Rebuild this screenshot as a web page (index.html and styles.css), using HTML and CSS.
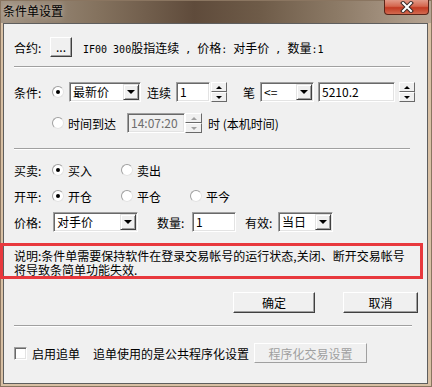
FILE: index.html
```
<!DOCTYPE html>
<html lang="zh-CN">
<head>
    <meta charset="UTF-8">
    <title>条件单设置</title>
    <link rel="stylesheet" href="styles.css">
</head>
<body>
    <div class="window">
        <div class="titlebar">
            <span class="title">条件单设置</span>
            <div class="close">
                <svg width="20" height="12" viewBox="0 0 20 12">
                    <path d="M6 2 L14 10 M14 2 L6 10" stroke="#3a2a28" stroke-width="4" stroke-linecap="square"/>
                    <path d="M6 2 L14 10 M14 2 L6 10" stroke="#fff" stroke-width="2" stroke-linecap="square"/>
                </svg>
            </div>
        </div>

        <div class="client">
            <div class="row contract">
                <span class="label w36">合约:</span>
                <div class="btn dots">...</div>
                <span class="summary"><span class="mono">IF00 300</span>股指连续<span class="mono"> , </span>价格<span class="mono">: </span>对手价<span class="mono"> , </span>数量<span class="mono">:1</span></span>
            </div>

            <div class="sep sep-top"></div>

            <div class="row cond1">
                <span class="label w38">条件:</span>
                <span class="radio checked"></span>
                <div class="combo w72 ml5"><span class="value">最新价</span><span class="arrow"></span></div>
                <span class="ml6">连续</span>
                <div class="edit w34 ml5">1</div>
                <div class="spin ml1"><span class="up"></span><span class="down"></span></div>
                <span class="ml16">笔</span>
                <div class="combo w54 ml5"><span class="value">&lt;=</span><span class="arrow"></span></div>
                <div class="edit w77 ml4">5210.2</div>
                <div class="spin ml4"><span class="up"></span><span class="down"></span></div>
            </div>

            <div class="row cond2">
                <span class="label w38"></span>
                <span class="radio"></span>
                <span class="ml4">时间到达</span>
                <div class="edit disabled w58 ml11">14:07:20</div>
                <div class="spin disabled"><span class="up"></span><span class="down"></span></div>
                <span class="ml6">时 (本机时间)</span>
            </div>

            <div class="sep sep-mid"></div>

            <div class="row side">
                <span class="label w38">买卖:</span>
                <span class="opt"><span class="radio checked"></span>买入</span>
                <span class="opt"><span class="radio"></span>卖出</span>
            </div>

            <div class="row offset">
                <span class="label w38">开平:</span>
                <span class="opt"><span class="radio checked"></span>开仓</span>
                <span class="opt"><span class="radio"></span>平仓</span>
                <span class="opt"><span class="radio"></span>平今</span>
            </div>

            <div class="row price">
                <span class="label w39">价格:</span>
                <div class="combo w85"><span class="value">对手价</span><span class="arrow"></span></div>
                <span class="label w35 ml19">数量:</span>
                <div class="edit w44">1</div>
                <span class="label w33 ml9">有效:</span>
                <div class="combo w55"><span class="value">当日</span><span class="arrow"></span></div>
            </div>

            <div class="note">说明:条件单需要保持软件在登录交易帐号的运行状态,关闭、断开交易帐号<br>将导致条简单功能失效.</div>

            <div class="actions">
                <div class="btn ok">确定</div>
                <div class="btn cancel">取消</div>
            </div>

            <div class="sep sep-bottom"></div>

            <div class="row follow">
                <span class="checkbox"></span>
                <span class="ml5">启用追单</span>
                <span class="ml13">追单使用的是公共程序化设置</span>
                <div class="btn prog disabled">程序化交易设置</div>
            </div>
        </div>
    </div>
</body>
</html>
```

FILE: styles.css
```
body {
    margin: 0;
    font-family: "Noto Sans CJK SC", "Liberation Sans", sans-serif;
    font-size: 12px;
    color: #000;
}

.window {
    width: 432px;
    height: 387px;
    box-sizing: border-box;
    padding: 0 4px 3px 3px;
    background:
        linear-gradient(180deg, rgba(0, 0, 0, 0) 0, rgba(0, 0, 0, 0) 23px, #d8c0a4 23px),
        linear-gradient(90deg, #a39585 0%, #85735f 22%, #5f4b3b 45%, #6e5b48 60%, #8c7a66 78%, #b6a493 100%);
    box-shadow: inset 0 0 0 1px #8a7560;
}

.titlebar {
    height: 23px;
    display: flex;
    align-items: flex-start;
    justify-content: space-between;
}

.title {
    line-height: 22px;
    color: #000;
    text-shadow: 0 0 6px rgba(255, 255, 255, 0.6);
}

.close {
    width: 45px;
    height: 15px;
    margin-right: -1px;
    box-sizing: border-box;
    border: 1px solid #5a2418;
    border-top: none;
    border-radius: 0 0 4px 4px;
    background: linear-gradient(180deg, #e29a88 0%, #d4664e 45%, #c23a22 55%, #d26a50 100%);
    display: flex;
    justify-content: center;
    align-items: center;
}

.client {
    height: 361px;
    box-sizing: border-box;
    border: 1px solid #5e5e5e;
    background: #f0f0f0;
    padding: 0 0 0 10px;
}

.row {
    display: flex;
    align-items: center;
    height: 20px;
    white-space: nowrap;
}

.contract { margin-top: 13px; }
.cond1 { margin-top: 14px; }
.cond2 { margin-top: 11px; }
.side { margin-top: 10px; }
.offset { margin-top: 6px; }
.price { margin-top: 6px; }
.follow { margin-top: 16px; }

.label { flex: none; }
.w33 { width: 33px; }
.w35 { width: 35px; }
.w36 { width: 36px; }
.w38 { width: 38px; }
.w39 { width: 39px; }

.ml1 { margin-left: 1px; }
.ml4 { margin-left: 4px; }
.ml5 { margin-left: 5px; }
.ml6 { margin-left: 6px; }
.ml9 { margin-left: 9px; }
.ml11 { margin-left: 11px; }
.ml13 { margin-left: 13px; }
.ml16 { margin-left: 16px; }
.ml19 { margin-left: 19px; }

.summary {
    margin-left: 11px;
    white-space: pre;
}

.mono {
    font-family: "DejaVu Sans Mono", monospace;
    font-size: 10px;
}

.sep {
    width: 396px;
    height: 0;
    border-top: 1px solid #a0a0a0;
    border-bottom: 1px solid #fff;
}

.sep-top { margin-top: 9px; }
.sep-mid { margin-top: 15px; width: 396px; }
.sep-bottom { margin-top: 12px; width: 398px; }

/* classic sunken fields */
.combo,
.edit {
    height: 20px;
    box-sizing: border-box;
    border: 1px solid;
    border-color: #a0a0a0 #fff #fff #a0a0a0;
    box-shadow: inset 1px 1px 0 #696969, inset -1px -1px 0 #e3e3e3;
    background: #fff;
    padding: 1px;
    display: flex;
    align-items: center;
}

.edit {
    padding-left: 3px;
    line-height: 16px;
}

.edit.disabled {
    background: #f0f0f0;
    color: #6d6d6d;
}

.w34 { width: 34px; }
.w44 { width: 44px; }
.w54 { width: 54px; }
.w55 { width: 55px; }
.w58 { width: 58px; }
.w72 { width: 72px; }
.w77 { width: 77px; }
.w85 { width: 85px; }

.combo .value {
    flex: 1;
    padding-left: 2px;
    line-height: 16px;
}

.combo .arrow {
    width: 16px;
    height: 16px;
    box-sizing: border-box;
    border: 1px solid;
    border-color: #e3e3e3 #404040 #404040 #e3e3e3;
    box-shadow: inset 1px 1px 0 #fff, inset -1px -1px 0 #a0a0a0;
    background: #f0f0f0;
    display: flex;
    align-items: center;
    justify-content: center;
}

.combo .arrow::after {
    content: "";
    border-left: 4px solid transparent;
    border-right: 4px solid transparent;
    border-top: 4px solid #000;
}

.spin {
    width: 16px;
    height: 20px;
    display: flex;
    flex-direction: column;
}

.spin.disabled { width: 17px; }

.spin span {
    flex: 1;
    box-sizing: border-box;
    border: 1px solid;
    border-color: #fff #696969 #696969 #fff;
    background: #f0f0f0;
    display: flex;
    align-items: center;
    justify-content: center;
}

.spin .up::after {
    content: "";
    border-left: 3px solid transparent;
    border-right: 3px solid transparent;
    border-bottom: 3px solid #000;
}

.spin .down::after {
    content: "";
    border-left: 3px solid transparent;
    border-right: 3px solid transparent;
    border-top: 3px solid #000;
}

.spin.disabled span::after {
    border-top-color: #a0a0a0;
    border-bottom-color: #a0a0a0;
}

.radio {
    flex: none;
    width: 12px;
    height: 12px;
    box-sizing: border-box;
    border-radius: 50%;
    border: 1px solid #a0a0a0;
    border-right-color: #e3e3e3;
    border-bottom-color: #e3e3e3;
    background: #fff;
    position: relative;
}

.radio.checked::after {
    content: "";
    position: absolute;
    left: 3px;
    top: 3px;
    width: 4px;
    height: 4px;
    border-radius: 50%;
    background: #000;
}

.opt {
    width: 69px;
    display: flex;
    align-items: center;
    gap: 4px;
}

.checkbox {
    width: 13px;
    height: 13px;
    box-sizing: border-box;
    border: 1px solid;
    border-color: #a0a0a0 #fff #fff #a0a0a0;
    box-shadow: inset 1px 1px 0 #696969, inset -1px -1px 0 #e3e3e3;
    background: #fff;
}

.btn {
    box-sizing: border-box;
    border: 1px solid;
    border-color: #fff #404040 #404040 #fff;
    box-shadow: inset -1px -1px 0 #a0a0a0;
    background: #f0f0f0;
    display: flex;
    align-items: center;
    justify-content: center;
}

.dots {
    width: 22px;
    height: 20px;
    line-height: 18px;
}

.note {
    margin: 11px 0 0 -14px;
    width: 423px;
    height: 36px;
    box-sizing: border-box;
    border: 3px solid #e8383d;
    padding: 3px 0 0 11px;
    line-height: 14px;
    white-space: nowrap;
}

.actions {
    margin-top: 13px;
    display: flex;
    justify-content: flex-end;
    padding-right: 9px;
    gap: 28px;
}

.ok {
    width: 82px;
    height: 21px;
}

.cancel {
    width: 75px;
    height: 21px;
}

.prog {
    margin-left: 5px;
    width: 113px;
    height: 20px;
}

.btn.disabled {
    color: #a0a0a0;
    border-color: #fff #a0a0a0 #a0a0a0 #fff;
    box-shadow: none;
}
```
